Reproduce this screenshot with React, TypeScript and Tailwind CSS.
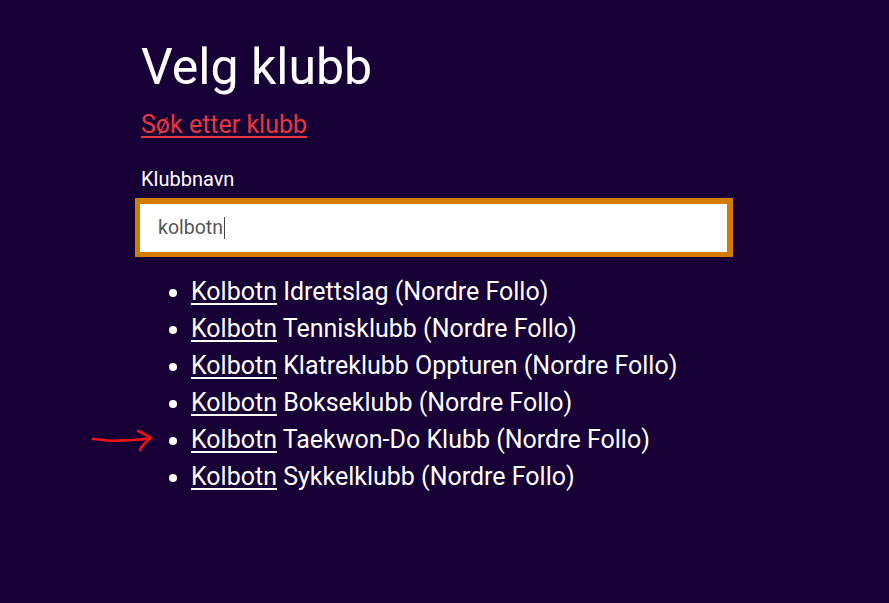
import React from "react";

const clubs = [
  "Idrettslag (Nordre Follo)",
  "Tennisklubb (Nordre Follo)",
  "Klatreklubb Oppturen (Nordre Follo)",
  "Bokseklubb (Nordre Follo)",
  "Taekwon-Do Klubb (Nordre Follo)",
  "Sykkelklubb (Nordre Follo)",
];

export default function App() {
  return (
    <div
      className="relative min-h-screen w-full bg-[#160036] text-white"
      style={{ fontFamily: "Roboto, 'Noto Sans', sans-serif" }}
    >
      <div className="pl-[141px] pr-[156px] pt-[38px]">
        <h1 className="text-[50px] leading-[58px] font-normal">Velg klubb</h1>
        <a
          href="#"
          className="mt-[12px] block w-fit text-[25px] leading-[33px] text-[#e5393f] underline underline-offset-[3px] decoration-[1.5px]"
        >
          Søk etter klubb
        </a>
        <label className="mt-[26px] block text-[20px] leading-[24px]">Klubbnavn</label>
        <div className="ml-[-6px] mt-[7px] border-[6px] border-b-[5px] border-l-[5px] border-[#d37a00] bg-white">
          <div className="flex h-[48px] items-center pl-[18px] text-[19.5px] text-[#555555]">
            <span>kolbotn</span>
            <span className="ml-[1px] inline-block h-[22px] w-[1px] bg-[#444]" />
          </div>
        </div>
        <ul className="mt-[16px] list-disc pl-[50px] text-[25px] leading-[37px]">
          {clubs.map((c) => (
            <li key={c}>
              <a href="#" className="underline underline-offset-[3px] decoration-[1.5px]">
                Kolbotn
              </a>{" "}
              {c}
            </li>
          ))}
        </ul>
      </div>
      <svg
        className="absolute left-[90px] top-[428px]"
        width="66"
        height="26"
        viewBox="0 0 66 26"
        fill="none"
      >
        <path
          d="M3 11 C 10 11.5, 16 12.7, 23 12.7 C 30 12.7, 36 12, 42 12 C 50 11.8, 56 11, 61 10"
          stroke="#ee1414"
          strokeWidth="2.6"
          strokeLinecap="round"
        />
        <path
          d="M48 3 C 53 5, 57 7.5, 61 10 C 57 13, 52 17, 50 22"
          stroke="#ee1414"
          strokeWidth="2.6"
          strokeLinecap="round"
          strokeLinejoin="round"
        />
      </svg>
    </div>
  );
}
